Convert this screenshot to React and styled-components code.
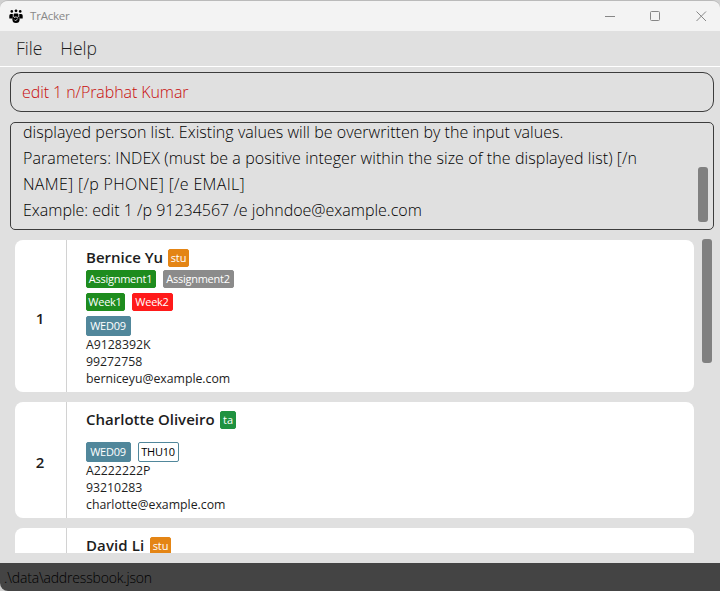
import React from "react";
import styled, { createGlobalStyle } from "styled-components";

const GlobalStyle = createGlobalStyle`
  * { box-sizing: border-box; }
  html, body { margin: 0; padding: 0; overflow: hidden; background: #d0d0d0; }
`;

const Window = styled.main`
  display: flex;
  flex-direction: column;
  width: 720px;
  height: 591px;
  overflow: hidden;
  border-top: 1px solid #bababa;
  border-radius: 8px 8px 0 8px;
  background: #e0e0e0;
  color: #1d1d1d;
  font-family: "Open Sans", "Noto Sans", sans-serif;
`;

const TitleBar = styled.header`
  display: flex;
  align-items: center;
  flex: none;
  height: 30px;
  padding: 0 13px 0 9px;
  background: #f3f3f3;
`;

const Title = styled.span`
  flex: 1;
  margin-left: 7px;
  font-size: 11.5px;
  line-height: 16px;
  letter-spacing: ${(p) => p.$track}px;
  color: #888;
`;

const WindowControls = styled.div`
  display: grid;
  grid-template-columns: 45px 46px 11px;
  height: 11px;
`;

const MenuBar = styled.nav`
  display: flex;
  flex: none;
  gap: 18px;
  height: 36px;
  padding: 4px 0 0 16px;
  border-bottom: 1px solid #fff;
`;

const MenuItem = styled.span`
  font-size: 17.5px;
  font-weight: 300;
  line-height: 26px;
  letter-spacing: ${(p) => p.$track}px;
`;

const CommandBox = styled.div`
  flex: none;
  height: 40px;
  margin: 5px 6px 0 10px;
  padding: 6px 11px;
  border: 1px solid #3c3c3c;
  border-radius: 11px;
  color: #c80c0c;
  font-size: 16px;
  font-weight: 300;
  line-height: 26px;
  letter-spacing: ${(p) => p.$track}px;
  white-space: pre;
`;

const ResultBox = styled.section`
  display: flex;
  align-items: flex-end;
  justify-content: space-between;
  flex: none;
  height: 108px;
  margin: 10px 6px 0 10px;
  padding: 0 5px 6px 12px;
  border: 1px solid #3c3c3c;
  border-radius: 5px;
  overflow: hidden;
`;

const ResultText = styled.div`
  color: #000;
  font-size: 16px;
  font-weight: 300;
  line-height: 26px;
  white-space: pre;
`;

const ResultLine = styled.div`
  letter-spacing: ${(p) => p.$track}px;
`;

const Thumb = styled.div`
  flex: none;
  width: 10px;
  height: ${(p) => p.$height}px;
  margin-bottom: ${(p) => p.$bottom || 0}px;
  border-radius: 3px;
  background: #808080;
`;

const ListArea = styled.section`
  display: flex;
  justify-content: space-between;
  flex: none;
  height: 314px;
  margin: 9px 8px 10px 15px;
  overflow: hidden;
`;

const Cards = styled.div`
  display: flex;
  flex-direction: column;
  gap: 10px;
  width: 679px;
  padding-top: 1px;
`;

const Card = styled.article`
  display: flex;
  flex: none;
  height: ${(p) => p.$height}px;
  border-radius: 8px;
  background: #fff;
`;

const Index = styled.div`
  display: flex;
  align-items: center;
  justify-content: center;
  width: 52px;
  padding: 3px 1px 0 0;
  border-right: 1px solid #d2d2d2;
  font-size: 15px;
  font-weight: 600;
`;

const Details = styled.div`
  padding: 8px 0 0 19px;
`;

const NameRow = styled.div`
  display: flex;
  align-items: center;
  gap: 6px;
  height: 20px;
`;

const Name = styled.span`
  width: ${(p) => p.$width}px;
  padding-bottom: 2px;
  font-size: 15px;
  font-weight: 600;
  line-height: 18px;
  white-space: nowrap;
  letter-spacing: ${(p) => p.$track}px;
`;

const TagRow = styled.div`
  display: flex;
  gap: 7px;
  height: ${(p) => p.$height}px;
  margin-top: ${(p) => p.$top}px;
`;

const tones = {
  student: "#e48515",
  assistant: "#1f9240",
  done: "#1e8c1e",
  pending: "#8b8b8b",
  absent: "#ff1a1a",
  slot: "#51879b",
};

const Tag = styled.span`
  display: flex;
  align-items: center;
  justify-content: center;
  width: ${(p) => p.$width}px;
  height: ${(p) => (p.$tall ? 20 : 18)}px;
  padding-right: ${(p) => (p.$medium ? 1 : 0)}px;
  border: 1px solid ${(p) => tones[p.$tone]};
  border-radius: 2px;
  background: ${(p) => (p.$outlined ? "#fff" : tones[p.$tone])};
  color: ${(p) => (p.$outlined ? "#000" : "#fff")};
  font-size: 11px;
  font-weight: ${(p) => (p.$medium ? 500 : 400)};
  line-height: 16px;
  letter-spacing: ${(p) => p.$track}px;
  white-space: nowrap;
`;

const Field = styled.div`
  font-size: 12.3px;
  line-height: 17px;
  letter-spacing: ${(p) => p.$track}px;
`;

const StatusBar = styled.footer`
  flex: none;
  height: 28px;
  padding: 2px 4px;
  background: #444;
  color: #000;
  font-size: 14px;
  font-weight: 300;
  line-height: 26px;
  letter-spacing: ${(p) => p.$track}px;
`;

const people = [
  {
    height: 152,
    name: ["Bernice Yu", 76, 0],
    role: ["stu", 21, "student"],
    rows: [
      { top: 2, height: 18, tags: [["Assignment1", 70, "done"], ["Assignment2", 71, "pending"]] },
      { top: 5, height: 18, tags: [["Week1", 39, "done"], ["Week2", 41, "absent"]] },
      { top: 5, height: 20, tags: [["WED09", 45, "slot"]] },
    ],
    fields: [["A9128392K", 0], ["99272758", 0], ["berniceyu@example.com", -0.02]],
  },
  {
    height: 116,
    name: ["Charlotte Oliveiro", 128, 0],
    role: ["ta", 16, "assistant"],
    rows: [
      { top: 12, height: 20, tags: [["WED09", 45, "slot"], ["THU10", 41, "slot", true]] },
    ],
    fields: [["A2222222P", 0], ["93210283", 0], ["charlotte@example.com", 0]],
  },
  {
    height: 116,
    name: ["David Li", 58, 0.1],
    role: ["stu", 21, "student"],
    rows: [],
    fields: [],
  },
];

const AppIcon = () => (
  <svg width="14" height="15" viewBox="0 0 14 15">
    <g fill="#000">
      <circle cx="2.8" cy="2.4" r="1.3" />
      <circle cx="7" cy="1.8" r="1.4" />
      <circle cx="11.2" cy="2.4" r="1.3" />
      <path d="M0.3 9.6V6.8Q0.3 5.1 1.8 5.1H3.8V9.6ZM13.7 9.6V6.8Q13.7 5.1 12.2 5.1H10.2V9.6ZM4.6 7.4V5.8Q4.6 4.4 5.8 4.4H8.2Q9.4 4.4 9.4 5.8V7.4Z" />
      <circle cx="7" cy="10.5" r="3.6" />
    </g>
    <path d="M5 8.6Q7 7.2 8.8 8.6M5.3 10.6L6.6 11.9L8.9 9.4" fill="none" stroke="#ddd" strokeWidth="0.9" />
  </svg>
);

const MinimizeIcon = () => (
  <svg width="10" height="11" viewBox="0 0 10 11"><path d="M0 5.5H10" stroke="#868686" /></svg>
);
const MaximizeIcon = () => (
  <svg width="10" height="11" viewBox="0 0 10 11"><rect x="0.5" y="0.5" width="9" height="9" rx="1" fill="none" stroke="#868686" /></svg>
);
const CloseIcon = () => (
  <svg width="11" height="11" viewBox="0 0 11 11"><path d="M0.5 0.5L10 10M10 0.5L0.5 10" stroke="#868686" /></svg>
);

function PersonCard({ person, index }) {
  const [name, nameWidth, nameTrack] = person.name;
  const [role, roleWidth, roleTone] = person.role;
  return (
    <Card $height={person.height}>
      <Index>{person.fields.length > 0 && index}</Index>
      <Details>
        <NameRow>
          <Name $width={nameWidth} $track={nameTrack}>{name}</Name>
          <Tag $width={roleWidth} $tone={roleTone} $track={-0.1}>{role}</Tag>
        </NameRow>
        {person.rows.map((row, i) => (
          <TagRow key={i} $top={row.top} $height={row.height}>
            {row.tags.map(([label, width, tone, outlined]) => (
              <Tag
                key={label}
                $width={width}
                $tone={tone}
                $outlined={outlined}
                $tall={row.height === 20}
                $track={-0.25}
                $medium
              >
                {label}
              </Tag>
            ))}
          </TagRow>
        ))}
        {person.fields.map(([text, track]) => (
          <Field key={text} $track={track}>{text}</Field>
        ))}
      </Details>
    </Card>
  );
}

export default function App() {
  return (
    <>
      <GlobalStyle />
      <Window>
        <TitleBar>
          <AppIcon />
          <Title $track={-0.2}>TrAcker</Title>
          <WindowControls>
            <MinimizeIcon />
            <MaximizeIcon />
            <CloseIcon />
          </WindowControls>
        </TitleBar>
        <MenuBar>
          <MenuItem $track={0}>File</MenuItem>
          <MenuItem $track={0}>Help</MenuItem>
        </MenuBar>
        <CommandBox $track={-0.08}>edit 1 n/Prabhat Kumar</CommandBox>
        <ResultBox>
          <ResultText>
            <ResultLine $track={0.035}>displayed person list. Existing values will be overwritten by the input values.</ResultLine>
            <ResultLine $track={0.085}>Parameters: INDEX (must be a positive integer within the size of the displayed list) [/n</ResultLine>
            <ResultLine $track={0.33}>NAME] [/p PHONE] [/e EMAIL]</ResultLine>
            <ResultLine $track={0}>Example: edit 1 /p 91234567 /e johndoe@example.com</ResultLine>
          </ResultText>
          <Thumb $height={55} $bottom={1} />
        </ResultBox>
        <ListArea>
          <Cards>
            {people.map((person, i) => (
              <PersonCard key={person.name[0]} person={person} index={i + 1} />
            ))}
          </Cards>
          <Thumb $height={124} />
        </ListArea>
        <StatusBar $track={-0.18}>.\data\addressbook.json</StatusBar>
      </Window>
    </>
  );
}
